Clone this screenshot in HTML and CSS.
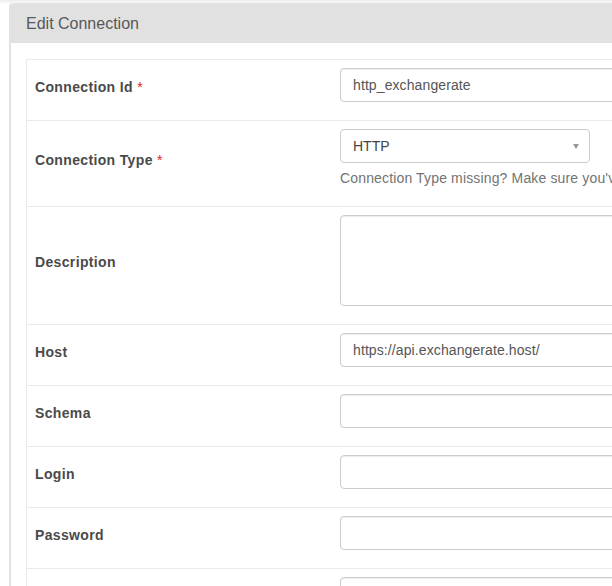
FILE: index.html
```html
<!DOCTYPE html>
<html>
<head>
<meta charset="utf-8">
<link rel="stylesheet" href="styles.css">
</head>
<body>
<div class="page">
  <div class="panel">
    <div class="panel-heading">Edit Connection</div>
    <div class="panel-body">
      <table class="form-table">
        <tr>
          <td class="label-cell"><label>Connection Id <span class="req">*</span></label></td>
          <td class="field-cell"><div class="form-group"><input class="form-control" type="text" value="http_exchangerate"></div></td>
        </tr>
        <tr>
          <td class="label-cell"><label>Connection Type <span class="req">*</span></label></td>
          <td class="field-cell">
            <div class="form-group">
              <div class="select">
                <span class="select-value">HTTP</span>
                <span class="select-arrow"></span>
              </div>
              <p class="help-block">Connection Type missing? Make sure you've installed the corresponding Airflow Provider Package.</p>
            </div>
          </td>
        </tr>
        <tr>
          <td class="label-cell"><label>Description</label></td>
          <td class="field-cell"><div class="form-group"><textarea class="form-control textarea"></textarea></div></td>
        </tr>
        <tr>
          <td class="label-cell"><label>Host</label></td>
          <td class="field-cell"><div class="form-group"><input class="form-control" type="text" value="https://api.exchangerate.host/"></div></td>
        </tr>
        <tr>
          <td class="label-cell"><label>Schema</label></td>
          <td class="field-cell"><div class="form-group"><input class="form-control" type="text" value=""></div></td>
        </tr>
        <tr>
          <td class="label-cell"><label>Login</label></td>
          <td class="field-cell"><div class="form-group"><input class="form-control" type="text" value=""></div></td>
        </tr>
        <tr>
          <td class="label-cell"><label>Password</label></td>
          <td class="field-cell"><div class="form-group"><input class="form-control" type="password" value=""></div></td>
        </tr>
        <tr>
          <td class="label-cell"><label>Port</label></td>
          <td class="field-cell"><div class="form-group"><input class="form-control" type="text" value=""></div></td>
        </tr>
      </table>
    </div>
  </div>
</div>
</body>
</html>
```

FILE: styles.css
```css
html, body {
  margin: 0;
  padding: 0;
  overflow: hidden;
  background: #fff;
  font-family: "Liberation Sans", Arial, sans-serif;
  font-size: 14px;
  color: #555;
}

.page {
  width: 1200px;
  padding-top: 3px;
  background: linear-gradient(#ececec, #fff 4px);
  height: 583px;
}

.panel {
  margin-left: 9px;
  border-left: 2px solid #e2e2e2;
  border-top-left-radius: 4px;
  background: #fff;
  height: 100%;
}

.panel-heading {
  height: 40px;
  line-height: 41px;
  padding: 0 15px;
  background: #e1e1e1;
  border-top-left-radius: 3px;
  font-size: 16px;
  color: #585858;
  overflow: hidden;
}

.panel-body {
  padding: 16px 15px 0 15px;
}

.form-table {
  border-collapse: collapse;
  width: 1100px;
  border-left: 1px solid #eaeaea;
  border-top: 1px solid #eaeaea;
}

.form-table td {
  border-bottom: 1px solid #eaeaea;
  padding: 8px;
  vertical-align: middle;
}

.label-cell {
  width: 289px;
}

.label-cell label {
  display: inline-block;
  margin-bottom: 7px;
  font-weight: bold;
  font-size: 14px;
  letter-spacing: 0.35px;
  line-height: 20px;
  color: #4a4a4a;
}

.req {
  color: #e02020;
  font-weight: normal;
}

.form-group {
  margin-bottom: 10px;
}

.form-control {
  display: block;
  box-sizing: border-box;
  width: 100%;
  height: 34px;
  padding: 6px 12px;
  font-family: "Liberation Sans", Arial, sans-serif;
  font-size: 14px;
  letter-spacing: 0.1px;
  color: #555;
  background: #fff;
  border: 1px solid #ccc;
  border-radius: 4px;
  box-shadow: inset 0 1px 1px rgba(0,0,0,0.075);
  margin: 0;
}

.textarea {
  height: 91px;
  resize: none;
}

.select {
  box-sizing: border-box;
  width: 250px;
  height: 34px;
  border: 1px solid #ccc;
  border-radius: 4px;
  padding: 0 12px;
  display: flex;
  align-items: center;
  justify-content: space-between;
  background: #fff;
}

.select-value {
  color: #444;
  font-size: 14px;
}

.select-arrow {
  width: 0;
  height: 0;
  border-left: 3.5px solid transparent;
  border-right: 3.5px solid transparent;
  border-top: 5px solid #999;
  margin-right: -2px;
}

.help-block {
  margin: 5px 0 0 0;
  line-height: 20px;
  color: #737373;
  letter-spacing: 0.15px;
  white-space: nowrap;
}
```
